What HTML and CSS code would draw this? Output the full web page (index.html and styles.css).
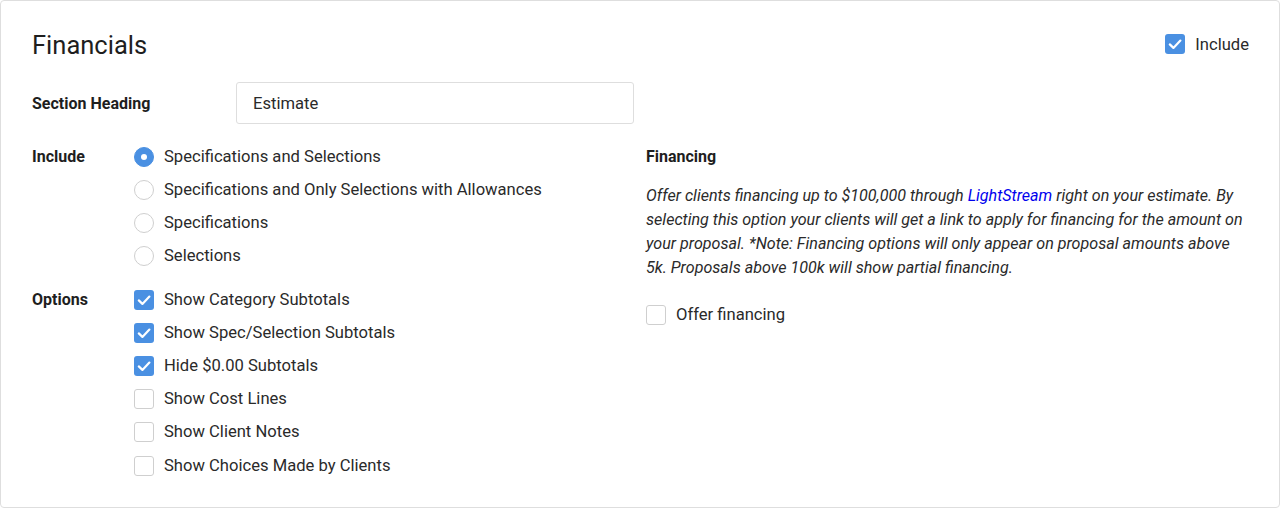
FILE: index.html
```html
<!DOCTYPE html>
<html>
<head>
<meta charset="utf-8">
<link rel="stylesheet" href="styles.css">
</head>
<body>
<div class="card">
  <div class="header">
    <h1 class="title">Financials</h1>
    <label class="check-row">
      <span class="box checked"><svg viewBox="0 0 20 20"><path d="M4.8 10.4l3.6 3.5L15.4 6.6" /></svg></span>
      <span>Include</span>
    </label>
  </div>
  <div class="grid">
    <div class="left">
      <div class="heading-row">
        <div class="label">Section Heading</div>
        <div class="input">Estimate</div>
      </div>
      <div class="group include-group">
        <div class="label">Include</div>
        <div class="items">
          <label class="check-row"><span class="radio on"></span><span>Specifications and Selections</span></label>
          <label class="check-row"><span class="radio"></span><span>Specifications and Only Selections with Allowances</span></label>
          <label class="check-row"><span class="radio"></span><span>Specifications</span></label>
          <label class="check-row"><span class="radio"></span><span>Selections</span></label>
        </div>
      </div>
      <div class="group options-group">
        <div class="label">Options</div>
        <div class="items">
          <label class="check-row"><span class="box checked"><svg viewBox="0 0 20 20"><path d="M4.8 10.4l3.6 3.5L15.4 6.6" /></svg></span><span>Show Category Subtotals</span></label>
          <label class="check-row"><span class="box checked"><svg viewBox="0 0 20 20"><path d="M4.8 10.4l3.6 3.5L15.4 6.6" /></svg></span><span>Show Spec/Selection Subtotals</span></label>
          <label class="check-row"><span class="box checked"><svg viewBox="0 0 20 20"><path d="M4.8 10.4l3.6 3.5L15.4 6.6" /></svg></span><span>Hide $0.00 Subtotals</span></label>
          <label class="check-row"><span class="box"></span><span>Show Cost Lines</span></label>
          <label class="check-row"><span class="box"></span><span>Show Client Notes</span></label>
          <label class="check-row"><span class="box"></span><span>Show Choices Made by Clients</span></label>
        </div>
      </div>
    </div>
    <div class="right">
      <div class="fin-title">Financing</div>
      <p class="fin-text">Offer clients financing up to $100,000 through <a class="link">LightStream</a> right on your estimate. By selecting this option your clients will get a link to apply for financing for the amount on your proposal. *Note: Financing options will only appear on proposal amounts above 5k. Proposals above 100k will show partial financing.</p>
      <label class="check-row"><span class="box"></span><span>Offer financing</span></label>
    </div>
  </div>
</div>
</body>
</html>
```

FILE: styles.css
```css
* { box-sizing: border-box; }
html, body { margin: 0; padding: 0; background: #fff; }
body {
  font-family: Roboto, "Liberation Sans", Arial, sans-serif;
  font-size: 16.6px;
  color: #222;
}
.card {
  width: 1280px;
  height: 508px;
  border: 1px solid #dedede;
  border-radius: 4px;
  padding: 27px 30px 0 31px;
}
.header {
  display: flex;
  justify-content: space-between;
  align-items: center;
  height: 34px;
}
.title {
  margin: 0;
  font-size: 25.5px;
  font-weight: 400;
  color: #1e1e1e;
}
.header .check-row { margin-top: -2px; }
.check-row {
  display: flex;
  align-items: center;
  gap: 10px;
  height: 33px;
  color: #2a2a2a;
}
.box {
  width: 20px;
  height: 20px;
  border: 1px solid #cfcfcf;
  border-radius: 3px;
  background: #fff;
  flex: none;
  display: flex;
}
.box.checked {
  background: #4a90e2;
  border: none;
}
.box svg {
  width: 20px;
  height: 20px;
  fill: none;
  stroke: #fff;
  stroke-width: 2.2;
  stroke-linecap: round;
  stroke-linejoin: round;
}
.radio {
  width: 20px;
  height: 20px;
  border: 1px solid #cfcfcf;
  border-radius: 50%;
  flex: none;
  background: #fff;
  display: flex;
  align-items: center;
  justify-content: center;
}
.radio.on {
  background: #4a90e2;
  border-color: #4a90e2;
}
.radio.on::after {
  content: "";
  width: 6px;
  height: 6px;
  border-radius: 50%;
  background: #fff;
}
.grid {
  display: grid;
  grid-template-columns: 614px 603px;
}
.label {
  font-weight: 700;
  font-size: 16px;
  color: #1e1e1e;
}
.heading-row {
  display: grid;
  grid-template-columns: 204px 398px;
  align-items: center;
  margin-top: 20px;
}
.input {
  height: 42px;
  border: 1px solid #dedede;
  border-radius: 3px;
  padding: 0 16px;
  display: flex;
  align-items: center;
  color: #2a2a2a;
}
.group {
  display: grid;
  grid-template-columns: 102px 1fr;
}
.group .label {
  height: 33px;
  display: flex;
  align-items: center;
}
.include-group { margin-top: 16px; }
.options-group { margin-top: 11px; }
.options-group .check-row:last-child { margin-top: 1px; }
.right {
  padding-top: 78px;
  padding-left: 0;
}
.fin-title {
  font-weight: 700;
  font-size: 16px;
  height: 33px;
  display: flex;
  align-items: center;
  color: #1e1e1e;
}
.fin-text {
  margin: 11px 0 18px 0;
  font-style: italic;
  font-size: 16.1px;
  line-height: 24px;
  color: #2a2a2a;
}
.link { color: #0000ee; }
```
